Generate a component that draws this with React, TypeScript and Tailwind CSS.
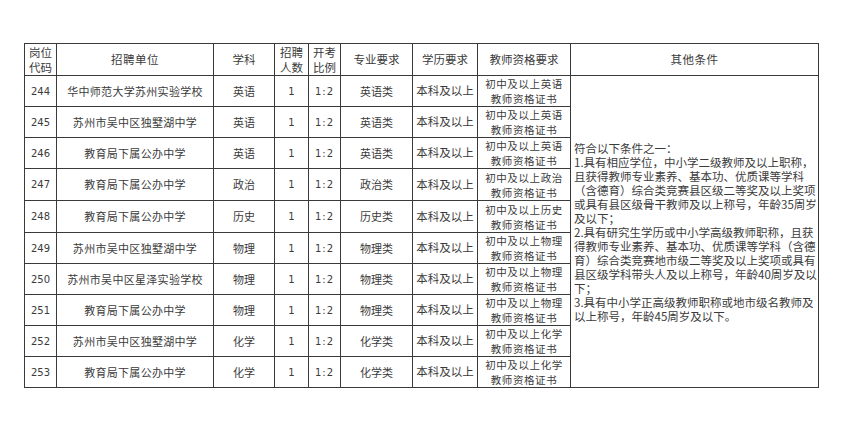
import React from 'react';

type Row = {
  code: string;
  school: string;
  subject: string;
  major: string;
  cert: string;
  h: number;
};

const rows: Row[] = [
  { code: '244', school: '华中师范大学苏州实验学校', subject: '英语', major: '英语类', cert: '初中及以上英语', h: 31 },
  { code: '245', school: '苏州市吴中区独墅湖中学', subject: '英语', major: '英语类', cert: '初中及以上英语', h: 31 },
  { code: '246', school: '教育局下属公办中学', subject: '英语', major: '英语类', cert: '初中及以上英语', h: 31 },
  { code: '247', school: '教育局下属公办中学', subject: '政治', major: '政治类', cert: '初中及以上政治', h: 32 },
  { code: '248', school: '教育局下属公办中学', subject: '历史', major: '历史类', cert: '初中及以上历史', h: 32 },
  { code: '249', school: '苏州市吴中区独墅湖中学', subject: '物理', major: '物理类', cert: '初中及以上物理', h: 31 },
  { code: '250', school: '苏州市吴中区星泽实验学校', subject: '物理', major: '物理类', cert: '初中及以上物理', h: 31 },
  { code: '251', school: '教育局下属公办中学', subject: '物理', major: '物理类', cert: '初中及以上物理', h: 31 },
  { code: '252', school: '苏州市吴中区独墅湖中学', subject: '化学', major: '化学类', cert: '初中及以上化学', h: 31 },
  { code: '253', school: '教育局下属公办中学', subject: '化学', major: '化学类', cert: '初中及以上化学', h: 31 },
];

const conditions = [
  '符合以下条件之一：',
  '1.具有相应学位，中小学二级教师及以上职称，',
  '且获得教师专业素养、基本功、优质课等学科',
  '（含德育）综合类竞赛县区级二等奖及以上奖项',
  '或具有县区级骨干教师及以上称号，年龄35周岁',
  '及以下；',
  '2.具有研究生学历或中小学高级教师职称，且获',
  '得教师专业素养、基本功、优质课等学科（含德',
  '育）综合类竞赛地市级二等奖及以上奖项或具有',
  '县区级学科带头人及以上称号，年龄40周岁及以',
  '下；',
  '3.具有中小学正高级教师职称或地市级名教师及',
  '以上称号，年龄45周岁及以下。',
];

const cjk = "font-['Noto_Sans_CJK_SC',sans-serif]";
const num = "font-['DejaVu_Sans',sans-serif]";
const cell = 'border border-[#3a3a3a] text-center align-middle p-0';

const Two = ({ a, b }: { a: string; b: string }) => (
  <>
    <div>{a}</div>
    <div>{b}</div>
  </>
);

export default function App() {
  return (
    <div className="min-h-[421px] w-[857px] bg-white pt-[43px] pl-[24px]">
      <table className={`w-[794px] table-fixed border-collapse text-[#3b3b3b] ${cjk}`}>
        <colgroup>
          <col className="w-[32px]" />
          <col className="w-[157px]" />
          <col className="w-[61px]" />
          <col className="w-[34px]" />
          <col className="w-[32px]" />
          <col className="w-[72px]" />
          <col className="w-[65px]" />
          <col className="w-[93px]" />
          <col className="w-[248px]" />
        </colgroup>
        <thead>
          <tr className="h-[32px] text-[11.5px] leading-[15px]">
            <th className={`${cell} font-normal`}><Two a="岗位" b="代码" /></th>
            <th className={`${cell} font-normal tracking-[0.5px]`}>招聘单位</th>
            <th className={`${cell} font-normal`}>学科</th>
            <th className={`${cell} font-normal`}><Two a="招聘" b="人数" /></th>
            <th className={`${cell} font-normal`}><Two a="开考" b="比例" /></th>
            <th className={`${cell} font-normal`}>专业要求</th>
            <th className={`${cell} font-normal`}>学历要求</th>
            <th className={`${cell} font-normal`}>教师资格要求</th>
            <th className={`${cell} font-normal tracking-[0.5px]`}>其他条件</th>
          </tr>
        </thead>
        <tbody>
          {rows.map((r, i) => (
            <tr key={r.code} className="text-[11px]" style={{ height: r.h }}>
              <td className={`${cell} ${num} text-[10px]`}>{r.code}</td>
              <td className={`${cell} tracking-[0.3px]`}>{r.school}</td>
              <td className={cell}>{r.subject}</td>
              <td className={`${cell} ${num} text-[10px]`}>1</td>
              <td className={`${cell} ${num} text-[10px] tracking-[1px]`}>1:2</td>
              <td className={cell}>{r.major}</td>
              <td className={`${cell} text-[11.5px]`}>本科及以上</td>
              <td className={`${cell} leading-[15px] text-[10.5px] tracking-[0.6px]`}>
                <Two a={r.cert} b="教师资格证书" />
              </td>
              {i === 0 && (
                <td
                  rowSpan={rows.length}
                  className="border border-[#3a3a3a] align-middle pl-[3px] text-left text-[11.5px] leading-[14px]"
                >
                  {conditions.map((l) => (
                    <div key={l} className="whitespace-nowrap">
                      {l}
                    </div>
                  ))}
                </td>
              )}
            </tr>
          ))}
        </tbody>
      </table>
    </div>
  );
}
